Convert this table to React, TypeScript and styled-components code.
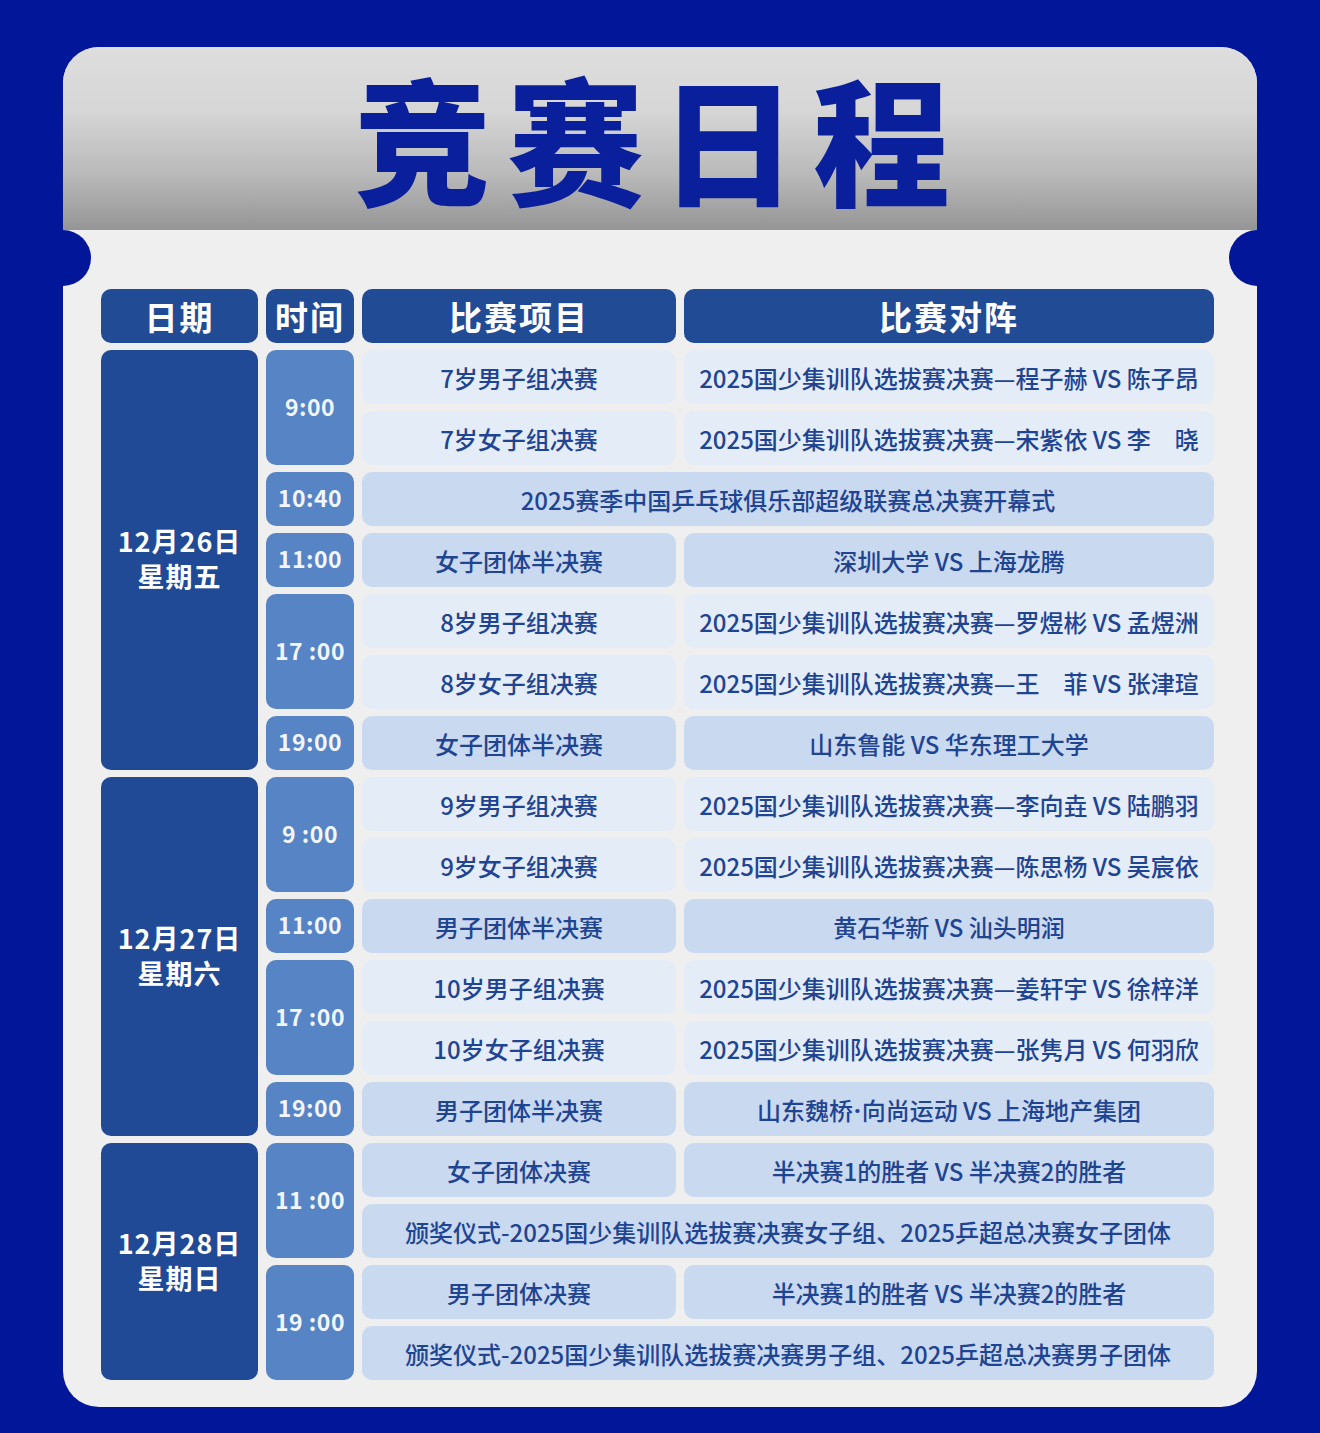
import React from 'react';
import styled, { createGlobalStyle } from 'styled-components';

const GlobalStyle = createGlobalStyle`
  html, body {
    margin: 0;
    padding: 0;
    background: #02169a;
  }
  body {
    font-family: "Noto Sans CJK SC", "Noto Sans", sans-serif;
  }
`;

const Page = styled.div`
  width: 1320px;
  height: 1433px;
  box-sizing: border-box;
  padding: 47px 63px 26px;
  background: #02169a;
`;

const Card = styled.div`
  height: 1360px;
  border-radius: 36px;
  overflow: hidden;
  background: #efefef;
  display: flex;
  flex-direction: column;
`;

const TitleBar = styled.div`
  height: 183px;
  flex-shrink: 0;
  display: flex;
  align-items: center;
  justify-content: center;
  background: linear-gradient(
    180deg,
    #dedede 0%,
    #d6d6d6 35%,
    #b9b9b9 70%,
    #959595 100%
  );
`;

const Title = styled.h1`
  margin: 0 0 4px 0;
  font-family: "Noto Sans CJK SC", sans-serif;
  font-weight: 900;
  font-size: 137px;
  line-height: 1.2;
  letter-spacing: 16px;
  color: #0a1f9c;
`;

const Body = styled.div`
  position: relative;
  flex: 1;
  padding: 59px 43px 26px 38px;

  &::before,
  &::after {
    content: '';
    position: absolute;
    top: 0;
    width: 56px;
    height: 56px;
    border-radius: 50%;
    background: #02169a;
  }
  &::before {
    left: -28px;
  }
  &::after {
    right: -28px;
  }
`;

const Grid = styled.div`
  display: grid;
  grid-template-columns: 157px 88px 314px 530px;
  grid-template-rows: 54px repeat(17, 54px);
  column-gap: 8px;
  row-gap: 7px;
`;

const Cell = styled.div<{ $row: number; $span?: number; $col: string }>`
  grid-row: ${(p) => p.$row} / span ${(p) => p.$span ?? 1};
  grid-column: ${(p) => p.$col};
  border-radius: 10px;
  display: flex;
  align-items: center;
  justify-content: center;
  text-align: center;
  white-space: pre;
`;

const HeadCell = styled(Cell)`
  background: #224b96;
  color: #ffffff;
  font-weight: 700;
  font-size: 33px;
  letter-spacing: 2px;
`;

const DateCell = styled(Cell)`
  flex-direction: column;
  background: #214a96;
  color: #ffffff;
  font-weight: 700;
  font-size: 27px;
  line-height: 35px;
  letter-spacing: 1px;
  padding-bottom: 4px;
`;

const TimeCell = styled(Cell)`
  background: #5684c5;
  color: #f2f6fc;
  font-weight: 700;
  font-size: 23px;
  letter-spacing: 0.5px;
  padding-bottom: 4px;
`;

const InfoCell = styled(Cell)<{ $light?: boolean }>`
  background: ${(p) => (p.$light ? '#e4ecf8' : '#c9d9f0')};
  color: #1f4491;
  font-weight: 500;
  font-size: 24px;
`;

const Dot = styled.span`
  font-family: "Noto Sans", sans-serif;
  font-weight: 700;
  margin: 0 1px;
`;

type Entry = { event: string; match?: string };
type Slot = { time: string; light?: boolean; entries: Entry[] };
type Day = { date: string; week: string; slots: Slot[] };

const P = '2025国少集训队选拔赛决赛—';

const schedule: Day[] = [
  {
    date: '12月26日',
    week: '星期五',
    slots: [
      {
        time: '9:00',
        light: true,
        entries: [
          { event: '7岁男子组决赛', match: P + '程子赫 VS 陈子昂' },
          { event: '7岁女子组决赛', match: P + '宋紫依 VS 李\u3000晓' },
        ],
      },
      { time: '10:40', entries: [{ event: '2025赛季中国乒乓球俱乐部超级联赛总决赛开幕式' }] },
      { time: '11:00', entries: [{ event: '女子团体半决赛', match: '深圳大学 VS 上海龙腾' }] },
      {
        time: '17 :00',
        light: true,
        entries: [
          { event: '8岁男子组决赛', match: P + '罗煜彬 VS 孟煜洲' },
          { event: '8岁女子组决赛', match: P + '王\u3000菲 VS 张津瑄' },
        ],
      },
      { time: '19:00', entries: [{ event: '女子团体半决赛', match: '山东鲁能 VS 华东理工大学' }] },
    ],
  },
  {
    date: '12月27日',
    week: '星期六',
    slots: [
      {
        time: '9 :00',
        light: true,
        entries: [
          { event: '9岁男子组决赛', match: P + '李向垚 VS 陆鹏羽' },
          { event: '9岁女子组决赛', match: P + '陈思杨 VS 吴宸依' },
        ],
      },
      { time: '11:00', entries: [{ event: '男子团体半决赛', match: '黄石华新 VS 汕头明润' }] },
      {
        time: '17 :00',
        light: true,
        entries: [
          { event: '10岁男子组决赛', match: P + '姜轩宇 VS 徐梓洋' },
          { event: '10岁女子组决赛', match: P + '张隽月 VS 何羽欣' },
        ],
      },
      { time: '19:00', entries: [{ event: '男子团体半决赛', match: '山东魏桥·向尚运动 VS 上海地产集团' }] },
    ],
  },
  {
    date: '12月28日',
    week: '星期日',
    slots: [
      {
        time: '11 :00',
        entries: [
          { event: '女子团体决赛', match: '半决赛1的胜者 VS 半决赛2的胜者' },
          { event: '颁奖仪式-2025国少集训队选拔赛决赛女子组、2025乒超总决赛女子团体' },
        ],
      },
      {
        time: '19 :00',
        entries: [
          { event: '男子团体决赛', match: '半决赛1的胜者 VS 半决赛2的胜者' },
          { event: '颁奖仪式-2025国少集训队选拔赛决赛男子组、2025乒超总决赛男子团体' },
        ],
      },
    ],
  },
];

const headers = [
  { label: '日期', col: '1' },
  { label: '时间', col: '2' },
  { label: '比赛项目', col: '3' },
  { label: '比赛对阵', col: '4' },
];

// the middle dot renders full-width in the CJK font, so give it a latin one
function withDots(text: string) {
  const parts = text.split('·');
  return parts.map((part, i) => (
    <React.Fragment key={i}>
      {i > 0 && <Dot>·</Dot>}
      {part}
    </React.Fragment>
  ));
}

function buildCells() {
  const cells: React.ReactNode[] = [];
  let row = 2;
  schedule.forEach((day, di) => {
    const dayRows = day.slots.reduce((n, s) => n + s.entries.length, 0);
    cells.push(
      <DateCell key={`d${di}`} $row={row} $span={dayRows} $col="1">
        <span>{day.date}</span>
        <span>{day.week}</span>
      </DateCell>
    );
    day.slots.forEach((slot, si) => {
      cells.push(
        <TimeCell key={`t${di}-${si}`} $row={row} $span={slot.entries.length} $col="2">
          {slot.time}
        </TimeCell>
      );
      slot.entries.forEach((entry, ei) => {
        const key = `${di}-${si}-${ei}`;
        if (entry.match) {
          cells.push(
            <InfoCell key={`e${key}`} $row={row} $col="3" $light={slot.light}>
              {entry.event}
            </InfoCell>,
            <InfoCell key={`m${key}`} $row={row} $col="4" $light={slot.light}>
              {withDots(entry.match)}
            </InfoCell>
          );
        } else {
          cells.push(
            <InfoCell key={`w${key}`} $row={row} $col="3 / span 2" $light={slot.light}>
              {entry.event}
            </InfoCell>
          );
        }
        row += 1;
      });
    });
  });
  return cells;
}

export default function App() {
  return (
    <>
      <GlobalStyle />
      <Page>
        <Card>
          <TitleBar>
            <Title>竞赛日程</Title>
          </TitleBar>
          <Body>
            <Grid>
              {headers.map((h) => (
                <HeadCell key={h.label} $row={1} $col={h.col}>
                  {h.label}
                </HeadCell>
              ))}
              {buildCells()}
            </Grid>
          </Body>
        </Card>
      </Page>
    </>
  );
}
